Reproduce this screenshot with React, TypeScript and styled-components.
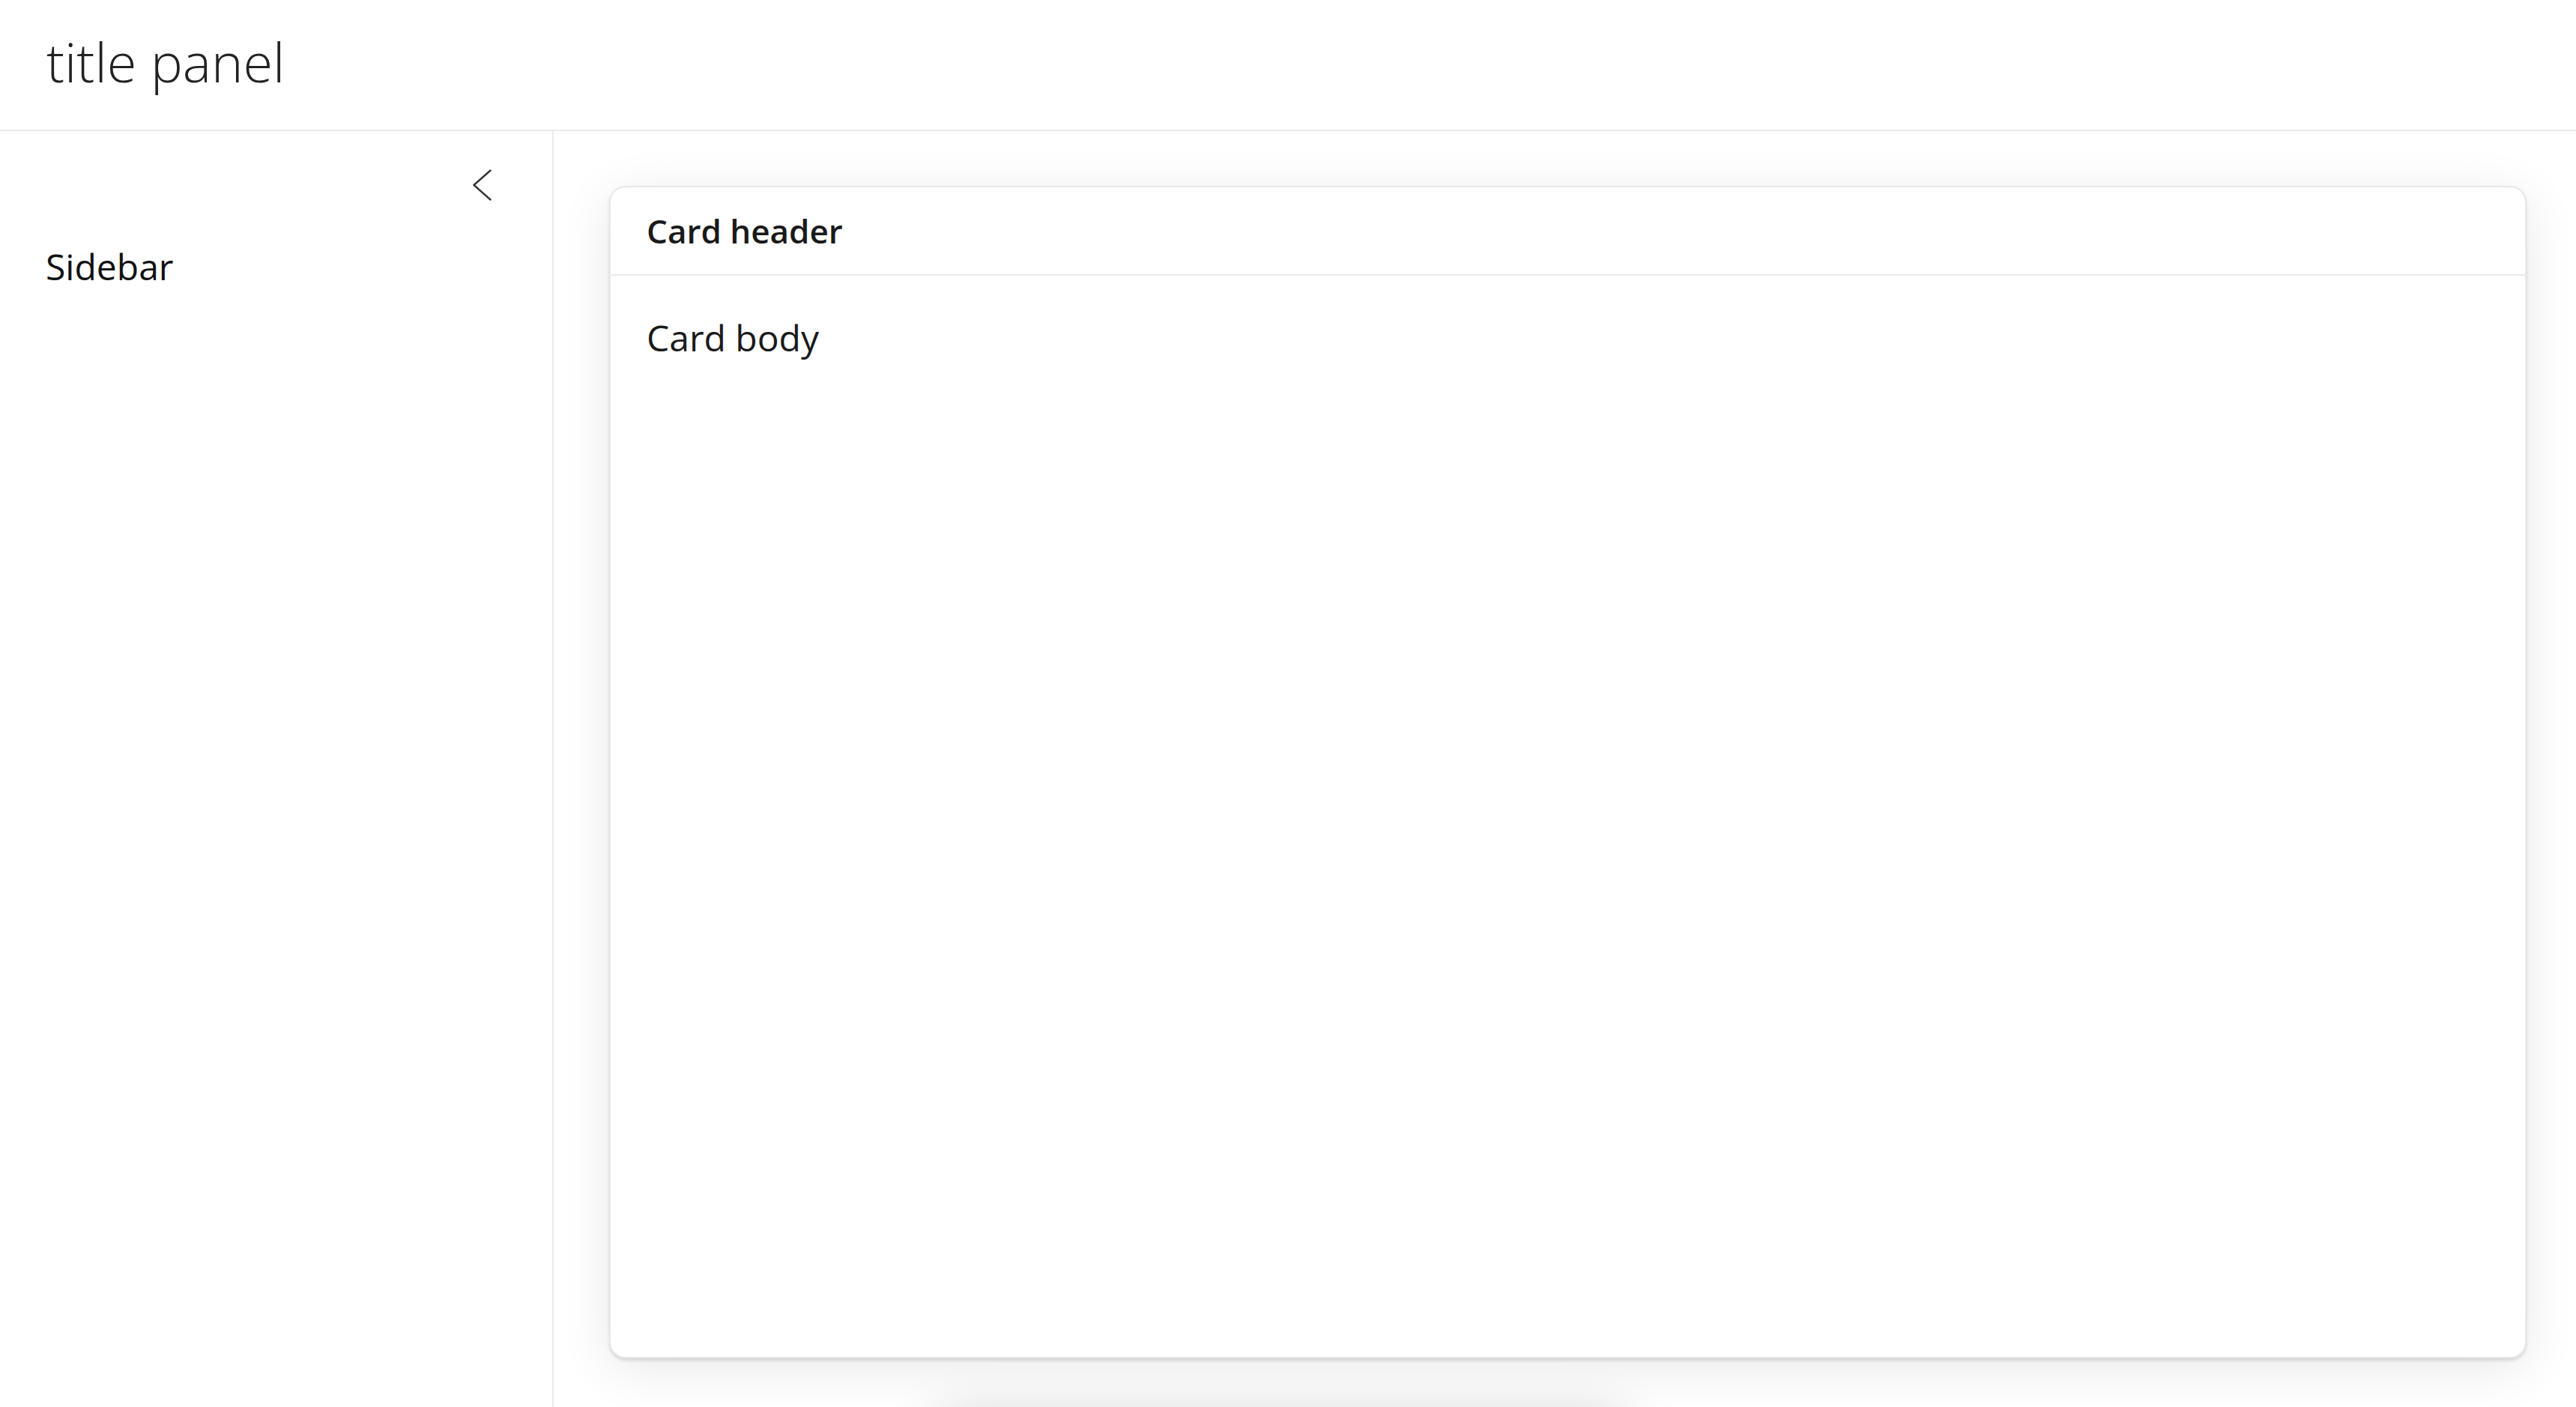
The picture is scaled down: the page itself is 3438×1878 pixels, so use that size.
import React from "react";
import styled, { createGlobalStyle } from "styled-components";

const GlobalStyle = createGlobalStyle`
  html, body {
    margin: 0;
    padding: 0;
    height: 100%;
    background: #ffffff;
    font-family: "Open Sans", "Noto Sans", sans-serif;
    color: #1c1c1c;
    overflow: hidden;
  }
  #root {
    height: 100%;
  }
  * {
    box-sizing: border-box;
  }
`;

const Page = styled.div`
  display: flex;
  flex-direction: column;
  height: 100vh;
`;

const TitleBar = styled.header`
  flex: 0 0 175px;
  display: flex;
  align-items: flex-start;
  padding: 33px 62px 0;
  border-bottom: 2px solid #ebebeb;
`;

const Title = styled.h1`
  margin: 0;
  font-family: "Open Sans", sans-serif;
  font-weight: 300;
  font-size: 72px;
  line-height: 98px;
  color: #222222;
`;

const Body = styled.div`
  flex: 1;
  display: flex;
  min-height: 0;
`;

const Sidebar = styled.aside`
  flex: 0 0 739px;
  display: flex;
  flex-direction: column;
  padding: 51px 81px 0 61px;
  border-right: 2px solid #ebebeb;
`;

const ToggleRow = styled.div`
  display: flex;
  justify-content: flex-end;
`;

const ToggleButton = styled.button`
  display: flex;
  padding: 0;
  border: none;
  background: none;
  cursor: pointer;
  color: #333333;
`;

const SidebarLabel = styled.div`
  margin-top: 52px;
  font-size: 48px;
  line-height: 72px;
  font-weight: 400;
  color: #111111;
`;

const Main = styled.main`
  flex: 1;
  display: flex;
  padding: 73px 66px 65px 74px;
  min-width: 0;
`;

const Card = styled.section`
  flex: 1;
  display: flex;
  flex-direction: column;
  background: #ffffff;
  border: 2px solid #e7e8ea;
  border-radius: 22px;
  box-shadow: 0 3px 4px rgba(0, 0, 0, 0.13), 0 14px 70px rgba(0, 0, 0, 0.09);
`;

const CardHeader = styled.div`
  padding: 25px 48px;
  font-size: 44px;
  line-height: 66px;
  font-weight: 600;
  color: #1a1a1a;
  border-bottom: 2px solid #ebebeb;
`;

const CardBody = styled.div`
  padding: 47px 48px;
  font-size: 48px;
  line-height: 72px;
  font-weight: 400;
  color: #1a1a1a;
`;

const OffscreenDock = styled.div`
  position: fixed;
  left: 1250px;
  width: 920px;
  top: 1900px;
  height: 120px;
  border-radius: 22px;
  background: #ffffff;
  box-shadow: 0 -4px 70px rgba(0, 0, 0, 0.22);
`;

const ChevronLeft = () => (
  <svg width="26" height="42" viewBox="0 0 26 42" fill="none">
    <polyline
      points="24.5,1.5 2.5,21 24.5,40.5"
      stroke="currentColor"
      strokeWidth="2.4"
      strokeLinecap="round"
      strokeLinejoin="round"
    />
  </svg>
);

export default function App() {
  return (
    <>
      <GlobalStyle />
      <Page>
        <TitleBar>
          <Title>title panel</Title>
        </TitleBar>
        <Body>
          <Sidebar>
            <ToggleRow>
              <ToggleButton aria-label="Collapse sidebar">
                <ChevronLeft />
              </ToggleButton>
            </ToggleRow>
            <SidebarLabel>Sidebar</SidebarLabel>
          </Sidebar>
          <Main>
            <Card>
              <CardHeader>Card header</CardHeader>
              <CardBody>Card body</CardBody>
            </Card>
          </Main>
        </Body>
      </Page>
      <OffscreenDock />
    </>
  );
}
